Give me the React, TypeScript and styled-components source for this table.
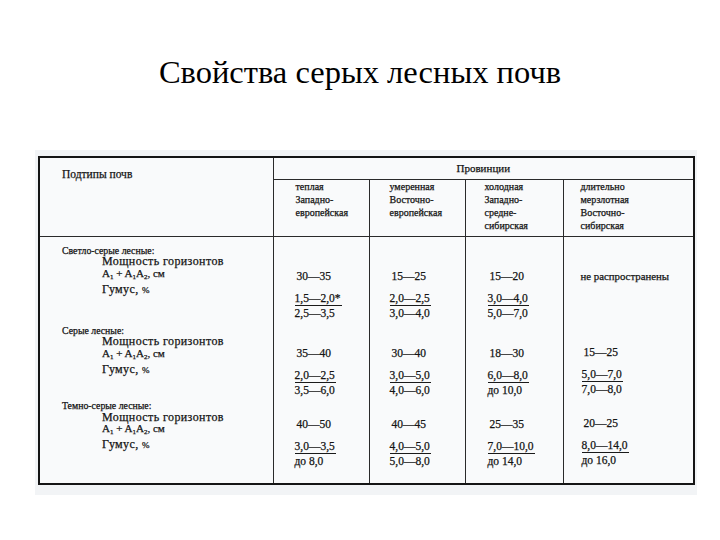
import React from 'react'
import styled, { createGlobalStyle } from 'styled-components'

const GlobalStyle = createGlobalStyle`
  html, body { margin: 0; padding: 0; background: #fff; }
  body { width: 720px; height: 540px; overflow: hidden; font-family: "Liberation Serif", "Times New Roman", serif; }
`

const Slide = styled.div`
  width: 720px;
  height: 540px;
  display: flex;
  flex-direction: column;
`

const Title = styled.h1`
  margin: 0;
  padding-top: 56px;
  height: 150px;
  box-sizing: border-box;
  text-align: center;
  font-family: "Liberation Serif", "Times New Roman", serif;
  font-weight: normal;
  font-size: 32.5px;
  line-height: 32px;
  color: #000;
`

const Scan = styled.div`
  margin-left: 35px;
  width: 662px;
  height: 345px;
  box-sizing: border-box;
  padding: 6px 4px 0 3px;
  background: #f2f4f6;
`

// scanned print looks heavier than a screen font, hence the light stroke
const Table = styled.table`
  width: 655px;
  border-collapse: collapse;
  table-layout: fixed;
  border: 2px solid #151515;
  font-family: "Liberation Serif", "Times New Roman", serif;
  color: #141414;
  background: #f9fafb;
  -webkit-text-stroke: 0.25px #141414;
`

const TopHead = styled.th`
  height: 22px;
  padding: 9px 0 0 22px;
  border: 1px solid #2a2a2a;
  border-right-width: 1.5px;
  border-bottom-width: 1.5px;
  box-sizing: border-box;
  text-align: left;
  vertical-align: top;
  font-weight: normal;
  font-size: 11.5px;
  line-height: 14px;
`

const ProvinceHead = styled.th`
  height: 22px;
  padding: 3px 0 0;
  box-sizing: border-box;
  border: 1px solid #2a2a2a;
  text-align: center;
  vertical-align: top;
  font-weight: normal;
  font-size: 11px;
  line-height: 14px;
`

const HeadCell = styled.th<{ $pad: number }>`
  height: 57px;
  box-sizing: border-box;
  border: 1px solid #2a2a2a;
  border-bottom-width: 1.5px;
  padding: 0 0 0 ${p => p.$pad}px;
  text-align: left;
  vertical-align: top;
  font-weight: normal;
  font-size: 10px;
  line-height: 13px;
`

const BodyRow = styled.tr`
  height: 248px;
`

const LabelCell = styled.td`
  border-left: 1px solid #2a2a2a;
  border-right: 1.5px solid #2a2a2a;
  vertical-align: top;
  padding: 8px 0 0 22px;
  line-height: 11.8px;
`

const LabelGroup = styled.div<{ $gap: number }>`
  margin-top: ${p => p.$gap}px;
`

const GroupName = styled.div`
  font-size: 9.8px;
`

const Indented = styled.div`
  padding-left: 40px;
  font-size: 12px;
  letter-spacing: 0.4px;
`

const Formula = styled(Indented)`
  font-size: 11px;
  letter-spacing: 0;
  sub { font-size: 7px; vertical-align: -2px; }
`

const Percent = styled.span`
  font-size: 9px;
`

const ValueCell = styled.td<{ $pad: number }>`
  border-left: 1px solid #2a2a2a;
  border-right: 1px solid #2a2a2a;
  vertical-align: top;
  padding: 32px 0 0 ${p => p.$pad}px;
  font-size: 11.5px;
  line-height: 14px;
`

const ValueBlock = styled.div<{ $gap: number }>`
  margin-top: ${p => p.$gap}px;
`

const Range = styled.div<{ $small?: boolean }>`
  padding-left: 2px;
  margin-bottom: 8px;
  font-size: ${p => (p.$small ? 10.8 : 11.5)}px;
  margin-left: ${p => (p.$small ? -3 : 0)}px;
`

const Fraction = styled.div`
  display: flex;
  flex-direction: column;
  align-items: flex-start;
`

const Numerator = styled.span`
  border-bottom: 1.5px solid #1a1a1a;
  padding-right: 1px;
`

const Denominator = styled.span`
  line-height: 14px;
`

type Cell = { range: string; top?: string; bottom?: string }

const columns: Cell[][] = [
  [
    { range: '30—35', top: '1,5—2,0*', bottom: '2,5—3,5' },
    { range: '35—40', top: '2,0—2,5', bottom: '3,5—6,0' },
    { range: '40—50', top: '3,0—3,5', bottom: 'до 8,0' },
  ],
  [
    { range: '15—25', top: '2,0—2,5', bottom: '3,0—4,0' },
    { range: '30—40', top: '3,0—5,0', bottom: '4,0—6,0' },
    { range: '40—45', top: '4,0—5,0', bottom: '5,0—8,0' },
  ],
  [
    { range: '15—20', top: '3,0—4,0', bottom: '5,0—7,0' },
    { range: '18—30', top: '6,0—8,0', bottom: 'до 10,0' },
    { range: '25—35', top: '7,0—10,0', bottom: 'до 14,0' },
  ],
  [
    { range: 'не распространены' },
    { range: '15—25', top: '5,0—7,0', bottom: '7,0—8,0' },
    { range: '20—25', top: '8,0—14,0', bottom: 'до 16,0' },
  ],
]

const valueGaps = [0, 26, 20]
const valuePads = [21, 20, 22, 18]

const groups = [
  { name: 'Светло-серые лесные:', gap: 0 },
  { name: 'Серые лесные:', gap: 28 },
  { name: 'Темно-серые лесные:', gap: 23 },
]

const provinces = [
  ['теплая', 'Западно-', 'европейская'],
  ['умеренная', 'Восточно-', 'европейская'],
  ['холодная', 'Западно-', 'средне-', 'сибирская'],
  ['длительно', 'мерзлотная', 'Восточно-', 'сибирская'],
]

const headPads = [22, 20, 19, 17]

export default function App() {
  return (
    <>
      <GlobalStyle />
      <Slide>
        <Title>Свойства серых лесных почв</Title>
        <Scan>
          <Table>
            <colgroup>
              <col style={{ width: 234 }} />
              <col style={{ width: 96 }} />
              <col style={{ width: 96 }} />
              <col style={{ width: 98 }} />
              <col style={{ width: 131 }} />
            </colgroup>
            <thead>
              <tr>
                <TopHead rowSpan={2}>Подтипы почв</TopHead>
                <ProvinceHead colSpan={4}>Провинции</ProvinceHead>
              </tr>
              <tr>
                {provinces.map((lines, i) => (
                  <HeadCell key={i} $pad={headPads[i]}>
                    {lines.map(l => <div key={l}>{l}</div>)}
                  </HeadCell>
                ))}
              </tr>
            </thead>
            <tbody>
              <BodyRow>
                <LabelCell>
                  {groups.map(g => (
                    <LabelGroup key={g.name} $gap={g.gap}>
                      <GroupName>{g.name}</GroupName>
                      <Indented>Мощность горизонтов</Indented>
                      <Formula>A<sub>1</sub> + A<sub>1</sub>A<sub>2</sub>, см</Formula>
                      <Indented>Гумус, <Percent>%</Percent></Indented>
                    </LabelGroup>
                  ))}
                </LabelCell>
                {columns.map((col, i) => (
                  <ValueCell key={i} $pad={valuePads[i]}>
                    {col.map((c, j) => (
                      <ValueBlock key={j} $gap={valueGaps[j]}>
                        <Range $small={!c.top}>{c.range}</Range>
                        {c.top ? (
                          <Fraction>
                            <Numerator>{c.top}</Numerator>
                            <Denominator>{c.bottom}</Denominator>
                          </Fraction>
                        ) : (
                          <Fraction>
                            <Denominator>&nbsp;</Denominator>
                            <Denominator>&nbsp;</Denominator>
                          </Fraction>
                        )}
                      </ValueBlock>
                    ))}
                  </ValueCell>
                ))}
              </BodyRow>
            </tbody>
          </Table>
        </Scan>
      </Slide>
    </>
  )
}
